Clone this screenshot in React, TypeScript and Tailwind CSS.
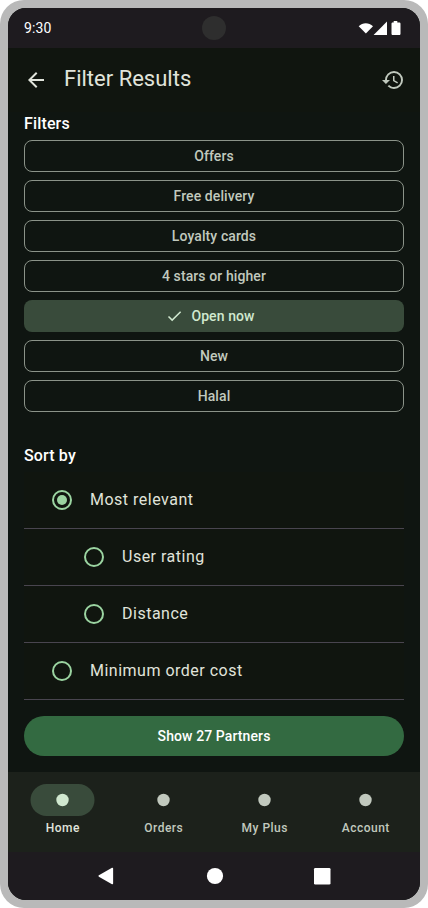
const filters = ['Offers', 'Free delivery', 'Loyalty cards', '4 stars or higher', 'Open now', 'New', 'Halal'];

const sortOptions = [
  { label: 'Most relevant', checked: true, nested: false },
  { label: 'User rating', checked: false, nested: true },
  { label: 'Distance', checked: false, nested: true },
  { label: 'Minimum order cost', checked: false, nested: false },
];

const tabs = ['Home', 'Orders', 'My Plus', 'Account'];

function StatusBar() {
  return (
    <div className="grid h-10 shrink-0 grid-cols-3 items-center bg-[#1e1b1f] px-4">
      <span className="text-sm leading-5 tracking-[0.14px] text-white">9:30</span>
      <span className="size-6 justify-self-center rounded-full bg-[#2e2e2e]" />
      <svg className="justify-self-end" width="46" height="17" viewBox="0 0 46 17" fill="#fff">
        <path d="M0.7 6.2C4.6 2.2 10.9 2.2 15 6.2L7.9 13.4Z" />
        <path d="M15.6 15H29V1.6Z" />
        <path d="M35.7 1h3.6v1.4h1.9c.8 0 1.3.5 1.3 1.3v10c0 .8-.5 1.3-1.3 1.3h-6.4c-.8 0-1.3-.5-1.3-1.3v-10c0-.8.5-1.3 1.3-1.3h.9z" />
      </svg>
    </div>
  );
}

function AppBar() {
  return (
    <header className="flex h-16 shrink-0 items-center bg-[#10150f] pr-[15px] pl-4">
      <svg width="24" height="24" viewBox="0 0 24 24" fill="#e0e4db">
        <path d="M20 11H7.83l5.59-5.59L12 4l-8 8 8 8 1.41-1.41L7.83 13H20z" />
      </svg>
      <h1 className="ml-4 flex-1 pb-[3px] text-[22px] leading-7 text-[#e0e4db]">Filter Results</h1>
      <svg width="24" height="24" viewBox="0 0 24 24" fill="#c1c9be">
        <path d="M13 3a9 9 0 0 0-9 9H1l3.89 3.89.07.14L9 12H6c0-3.87 3.13-7 7-7s7 3.13 7 7-3.13 7-7 7c-1.93 0-3.68-.79-4.94-2.06l-1.42 1.42A8.95 8.95 0 0 0 13 21a9 9 0 0 0 0-18zm-1 5v5l4.28 2.54.72-1.21-3.5-2.08V8z" />
      </svg>
    </header>
  );
}

function FilterChip({ label, selected }: { label: string; selected: boolean }) {
  return (
    <button
      className={
        selected
          ? 'flex h-8 items-center justify-center gap-2 rounded-lg bg-[#394b3b] pr-2 text-sm font-medium tracking-[0.1px] text-[#d0e8cf]'
          : 'flex h-8 items-center justify-center rounded-lg border border-[#8b9389] text-sm font-medium tracking-[0.1px] text-[#c1c9be]'
      }
    >
      {selected && (
        <svg width="18" height="18" viewBox="0 0 18 18" fill="#d0e8cf">
          <path d="M7.16 12.11 4.03 8.98l-1.07 1.06 4.2 4.2 9-9-1.06-1.06z" />
        </svg>
      )}
      {label}
    </button>
  );
}

function SortRow({ label, checked, nested }: { label: string; checked: boolean; nested: boolean }) {
  return (
    <li
      className={
        nested
          ? 'flex h-[57px] items-center gap-[18px] border-b border-[#49454f] bg-[#10150f] pl-[60px]'
          : 'flex h-[57px] items-center gap-[18px] border-b border-[#49454f] bg-[#10150f] pl-7'
      }
    >
      <span className="flex size-5 items-center justify-center rounded-full border-2 border-[#9bd4a1]">
        {checked && <span className="size-2.5 rounded-full bg-[#9bd4a1]" />}
      </span>
      <span className="text-base leading-6 tracking-[0.5px] text-[#e0e4db]">{label}</span>
    </li>
  );
}

function Tab({ label, active }: { label: string; active: boolean }) {
  return (
    <div className="flex flex-1 flex-col items-center gap-1 pt-3">
      <span
        className={
          active
            ? 'mr-px flex h-8 w-16 translate-x-[0.5px] items-center justify-center rounded-2xl bg-[#394b3b]'
            : 'mr-px flex h-8 w-16 translate-x-[0.5px] items-center justify-center'
        }
      >
        <svg width="24" height="24" viewBox="0 0 24 24" fill={active ? '#d0e8cf' : '#c1c9be'}>
          <circle cx="12" cy="12" r="6.2" />
        </svg>
      </span>
      <span
        className={
          active
            ? 'pl-[0.5px] text-xs leading-4 font-medium tracking-[0.5px] text-[#e0e4db]'
            : 'pl-[0.5px] text-xs leading-4 font-medium tracking-[0.5px] text-[#c1c9be]'
        }
      >
        {label}
      </span>
    </div>
  );
}

function SystemNav() {
  return (
    <div className="flex h-12 shrink-0 items-center justify-center bg-[#1e1b1f]">
      <svg width="236" height="20" viewBox="0 0 236 20" fill="#fff">
        <path d="M2.9 9.3 16 1.8c.6-.3 1.1 0 1.1.6v15.2c0 .6-.5.9-1.1.6L2.9 10.7c-.6-.4-.6-1 0-1.4z" />
        <circle cx="119" cy="10" r="8.1" />
        <rect x="218" y="2" width="16.5" height="16.5" rx="1.3" />
      </svg>
    </div>
  );
}

export default function App() {
  return (
    <div className="h-[908px] w-[428px] bg-white font-['Roboto',sans-serif]">
      <div className="h-full rounded-3xl bg-[#b9b9b9] p-2">
        <div className="flex h-full flex-col overflow-hidden rounded-[18px] bg-[#0f1511]">
          <StatusBar />
          <AppBar />
          <main className="flex flex-1 flex-col px-4">
            <h2 className="h-7 text-base leading-6 font-medium tracking-[0.15px] text-white">Filters</h2>
            <div className="flex flex-col gap-2">
              {filters.map((label) => (
                <FilterChip key={label} label={label} selected={label === 'Open now'} />
              ))}
            </div>
            <h2 className="mt-8 h-7 text-base leading-6 font-medium tracking-[0.15px] text-white">Sort by</h2>
            <ul>
              {sortOptions.map((option) => (
                <SortRow key={option.label} {...option} />
              ))}
            </ul>
            <button className="mt-4 h-10 rounded-full bg-[#336a41] text-sm font-medium tracking-[0.1px] text-white">
              Show 27 Partners
            </button>
          </main>
          <nav className="flex h-20 shrink-0 gap-2 bg-[#1c211b] px-2">
            {tabs.map((label) => (
              <Tab key={label} label={label} active={label === 'Home'} />
            ))}
          </nav>
          <SystemNav />
        </div>
      </div>
    </div>
  );
}
